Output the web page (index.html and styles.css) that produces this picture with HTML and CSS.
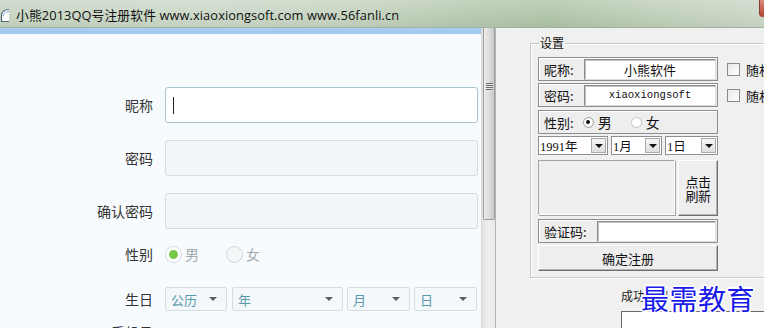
FILE: index.html
```html
<!DOCTYPE html>
<html lang="zh-CN">
<head>
<meta charset="utf-8">
<title>小熊2013QQ号注册软件</title>
<link rel="stylesheet" href="styles.css">
</head>
<body>
<div class="window">
  <div class="titlebar">
    <svg class="app-icon" width="9" height="16" viewBox="0 0 9 16"><path d="M9 2.5 Q1.5 2.5 1.5 9 L1.5 14.5 L9 14.5" fill="#fbfdff" stroke="#4f6378" stroke-width="1.2"/><path d="M9 4.5 Q3.5 4.5 3.5 9" fill="none" stroke="#8fb3d6" stroke-width="1"/></svg>
    <span class="title">小熊2013QQ号注册软件 www.xiaoxiongsoft.com www.56fanli.cn</span>
    <span class="close"></span>
  </div>
  <div class="main">
    <div class="web">
      <div class="web-top"></div>
      <div class="form">
        <div class="row row-input">
          <span class="label">昵称</span>
          <div class="input focus"><span class="caret"></span></div>
        </div>
        <div class="row row-input gap17">
          <span class="label">密码</span>
          <div class="input"></div>
        </div>
        <div class="row row-input gap17">
          <span class="label">确认密码</span>
          <div class="input"></div>
        </div>
        <div class="row row-gender">
          <span class="label">性别</span>
          <span class="radio checked"></span><span class="radio-text">男</span>
          <span class="radio unchecked"></span><span class="radio-text">女</span>
        </div>
        <div class="row row-birth">
          <span class="label">生日</span>
          <div class="select w-cal">公历<span class="arrow"></span></div>
          <div class="select w-year">年<span class="arrow"></span></div>
          <div class="select w-month">月<span class="arrow"></span></div>
          <div class="select w-day">日<span class="arrow"></span></div>
        </div>
        <div class="row row-next">
          <span class="label">手机号</span>
        </div>
      </div>
    </div>
    <div class="scrollbar">
      <div class="thumb"><span class="grip"></span></div>
    </div>
    <div class="panel">
      <div class="group">
        <span class="group-title">设置</span>
        <div class="opt-row">
          <div class="box"><span class="box-label">昵称:</span><div class="tb tb-name">小熊软件</div></div>
          <span class="check"></span><span class="check-text">随机</span>
        </div>
        <div class="opt-row mt2">
          <div class="box"><span class="box-label">密码:</span><div class="tb tb-name mono">xiaoxiongsoft</div></div>
          <span class="check"></span><span class="check-text">随机</span>
        </div>
        <div class="opt-row mt3">
          <div class="box">
            <span class="box-label">性别:</span>
            <span class="cradio on"></span><span class="cradio-text">男</span>
            <span class="cradio off"></span><span class="cradio-text">女</span>
          </div>
        </div>
        <div class="opt-row mt2 combos">
          <div class="combo c-year"><span class="combo-text">1991年</span><span class="combo-btn"></span></div>
          <div class="combo c-month"><span class="combo-text">1月</span><span class="combo-btn"></span></div>
          <div class="combo c-day"><span class="combo-text">1日</span><span class="combo-btn"></span></div>
        </div>
        <div class="opt-row mt5 captcha-row">
          <div class="captcha"></div>
          <div class="btn refresh"><span>点击</span><span>刷新</span></div>
        </div>
        <div class="opt-row mt3">
          <div class="box"><span class="box-label">验证码:</span><div class="tb tb-code"></div></div>
        </div>
        <div class="opt-row mt2">
          <div class="btn submit">确定注册</div>
        </div>
      </div>
      <div class="result">
        <span class="result-label">成功号码:</span>
        <div class="result-box"></div>
        <span class="watermark">最需教育</span>
      </div>
    </div>
  </div>
</div>
</body>
</html>
```

FILE: styles.css
```css
* { box-sizing: border-box; }
html, body { margin: 0; padding: 0; }
body {
  width: 764px;
  height: 328px;
  overflow: hidden;
  background: #f0f0f0;
  font-family: "Noto Sans CJK SC", sans-serif;
}
.window { width: 764px; height: 328px; overflow: hidden; }

/* title bar */
.titlebar {
  height: 28px;
  display: flex;
  align-items: center;
  padding-top: 2px;
  border-bottom: 1px solid #a2b09f;
  background:
    linear-gradient(180deg, rgba(255,255,255,0.22) 0%, rgba(255,255,255,0.05) 60%, rgba(0,0,0,0.03) 100%),
    linear-gradient(90deg, #c4d3c0 0%, #cad7c6 25%, #c4d3bf 45%, #b4c7ad 62%, #aec3a6 72%, #bccdb6 85%, #c9d6c5 100%);
}
.app-icon { flex: none; margin-left: 0; }
.title {
  margin-left: 7px;
  font-family: "Open Sans", "Noto Sans CJK SC", sans-serif;
  font-size: 12.8px;
  color: #111;
  white-space: nowrap;
  letter-spacing: 0.1px;
}
.close {
  margin-left: auto;
  align-self: flex-start;
  margin-top: -2px;
  width: 5px;
  height: 17px;
  background: linear-gradient(180deg, #dc8b7d, #b6412e);
  border-radius: 0 0 0 4px;
  border-left: 1px solid #8a3a2e;
}

.main { display: flex; height: 300px; }

/* left web form */
.web {
  width: 481px;
  flex: none;
  background: #f7fbfd;
}
.web-top {
  height: 6px;
  background: linear-gradient(180deg, #a9cff1, #9cc6ec);
}
.form { padding-top: 53px; }
.row { display: flex; align-items: center; }
.row .label {
  width: 153px;
  margin-right: 12px;
  text-align: right;
  font-size: 14px;
  color: #333;
  flex: none;
}
.row-input { height: 36px; }
.gap17 { margin-top: 17px; }
.input {
  width: 313px;
  height: 36px;
  border: 1px solid #d3dde3;
  border-radius: 3px;
  background: #f2f6f9;
  display: flex;
  align-items: center;
}
.input.focus {
  background: #fff;
  border-color: #a5c6cf;
}
.caret {
  width: 1px;
  height: 17px;
  margin-left: 7px;
  background: #222;
}
.row-gender { margin-top: 13px; height: 24px; }
.radio {
  width: 17px;
  height: 17px;
  border-radius: 50%;
  border: 1px solid #cfd7db;
  background: #fff;
  flex: none;
  display: flex;
  align-items: center;
  justify-content: center;
}
.radio.checked::after {
  content: "";
  width: 9px;
  height: 9px;
  border-radius: 50%;
  background: #76c84a;
}
.radio.unchecked { margin-left: 27px; background: #f4f7f8; }
.radio-text {
  margin-left: 3px;
  font-size: 14px;
  color: #a4abb0;
}
.row-birth { margin-top: 21px; height: 24px; }
.select {
  height: 24px;
  border: 1px solid #d3dde3;
  border-radius: 2px;
  background: #f4f8fa;
  font-size: 13px;
  color: #5a98ae;
  padding-left: 5px;
  display: flex;
  align-items: center;
  flex: none;
}
.arrow {
  margin-left: auto;
  margin-right: 9px;
  width: 0;
  height: 0;
  border-left: 4px solid transparent;
  border-right: 4px solid transparent;
  border-top: 4px solid #5a5f63;
}
.w-cal { width: 62px; }
.w-year { width: 111px; margin-left: 5px; }
.w-month { width: 63px; margin-left: 4px; }
.w-day { width: 63px; margin-left: 4px; }
.row-next { margin-top: 11px; height: 20px; }

/* scrollbar */
.scrollbar {
  width: 15px;
  flex: none;
  background: linear-gradient(90deg, #e2e2e2, #efefef 50%, #e8e8e8);
  border-left: 1px solid #d8d8d8;
  border-right: 1px solid #b5b5b5;
}
.thumb {
  margin-left: 1px;
  width: 12px;
  height: 192px;
  border: 1px solid #9c9c9c;
  border-top: none;
  border-radius: 0 0 2px 2px;
  background: linear-gradient(90deg, #ececec, #dcdcdc 50%, #c9c9c9);
  display: flex;
  justify-content: center;
  padding-top: 55px;
}
.grip {
  width: 7px;
  height: 8px;
  background: repeating-linear-gradient(180deg, #6c6c6c 0 1px, #e8e8e8 1px 2px);
}

/* right panel */
.panel {
  flex: 1;
  background: #f0f0f0;
  padding-top: 15px;
  position: relative;
  font-size: 12px;
  color: #000;
}
.group {
  position: relative;
  margin-left: 34px;
  width: 260px;
  height: 235px;
  border: 1px solid #c6c9cb;
  box-shadow: inset 1px 1px 0 #fff, 1px 1px 0 #fff;
  padding: 13px 0 0 7px;
}
.group-title {
  position: absolute;
  top: -8px;
  left: 8px;
  padding: 0 1px;
  background: #f0f0f0;
  font-size: 12px;
  line-height: 14px;
  color: #111;
}
.opt-row { display: flex; align-items: center; }
.mt2 { margin-top: 2px; }
.mt3 { margin-top: 3px; }
.mt5 { margin-top: 5px; }
.box {
  width: 180px;
  height: 24px;
  border: 1px solid #8d8d8d;
  box-shadow: inset 1px 1px 0 #fff;
  background: #eeeeee;
  display: flex;
  align-items: center;
  padding-left: 5px;
  flex: none;
}
.box-label { font-size: 13px; color: #111; white-space: nowrap; }
.tb {
  margin-left: auto;
  margin-right: 1px;
  height: 21px;
  background: #fff;
  border: 1px solid #8a8a8a;
  border-right-color: #dcdcdc;
  border-bottom-color: #dcdcdc;
  box-shadow: inset 1px 1px 0 #c4c4c4;
  display: flex;
  align-items: center;
  justify-content: center;
  font-size: 13px;
  color: #111;
}
.tb-name { width: 132px; }
.tb-code { width: 119px; }
.mono {
  font-family: "Liberation Mono", monospace;
  font-size: 10.6px;
  letter-spacing: 0;
}
.check {
  width: 13px;
  height: 13px;
  margin-left: 9px;
  border: 1px solid #8b8b8b;
  background: linear-gradient(135deg, #e8e8e8, #fff);
  flex: none;
}
.check-text { margin-left: 6px; font-size: 13px; color: #111; white-space: nowrap; }
.cradio {
  width: 11px;
  height: 11px;
  border-radius: 50%;
  border: 1px solid #9a9a9a;
  background: #fff;
  display: flex;
  align-items: center;
  justify-content: center;
  flex: none;
}
.cradio.on { margin-left: 9px; }
.cradio.on::after {
  content: "";
  width: 4px;
  height: 4px;
  border-radius: 50%;
  background: #111;
}
.cradio.off { margin-left: 19px; border-color: #c2c2c2; }
.cradio-text { margin-left: 4px; font-size: 14px; color: #111; }
.combos { height: 19px; }
.combo {
  height: 19px;
  border: 1px solid #8f8f8f;
  background: #fff;
  display: flex;
  align-items: center;
  padding: 0 1px;
  flex: none;
}
.combo-text {
  font-family: "Liberation Serif", "Noto Sans CJK SC", serif;
  font-size: 12.5px;
  color: #111;
  white-space: nowrap;
}
.combo-btn {
  margin-left: auto;
  width: 15px;
  height: 15px;
  border: 1px solid #a8a8a8;
  background: linear-gradient(180deg, #f6f6f6, #dedede);
  display: flex;
  align-items: center;
  justify-content: center;
}
.combo-btn::after {
  content: "";
  width: 0;
  height: 0;
  border-left: 4px solid transparent;
  border-right: 4px solid transparent;
  border-top: 4px solid #111;
}
.c-year { width: 70px; }
.c-month { width: 51px; margin-left: 3px; }
.c-day { width: 53px; margin-left: 3px; }
.captcha-row { align-items: stretch; }
.captcha {
  width: 137px;
  height: 55px;
  border: 1px solid #a4a4a4;
  border-right-color: #fff;
  border-bottom-color: #fff;
  box-shadow: 1px 1px 0 #a4a4a4;
  background: #efefef;
}
.btn {
  border: 1px solid #fff;
  border-right-color: #6e6e6e;
  border-bottom-color: #6e6e6e;
  box-shadow: inset -1px -1px 0 #b4b4b4;
  background: #eeeeee;
  display: flex;
  align-items: center;
  justify-content: center;
  color: #111;
}
.refresh {
  width: 40px;
  height: 56px;
  margin-left: 3px;
  flex-direction: column;
  font-size: 13px;
  line-height: 14px;
  letter-spacing: -0.5px;
  padding-top: 1px;
}
.submit {
  width: 180px;
  height: 26px;
  font-size: 13px;
}

/* result */
.result {
  position: relative;
  margin-left: 125px;
  margin-top: 10px;
}
.result-label {
  display: block;
  font-size: 12px;
  line-height: 16px;
  color: #222;
  white-space: nowrap;
}
.result-box {
  margin-top: 7px;
  width: 200px;
  height: 30px;
  background: #fff;
  border: 1px solid #6a6a6a;
}
.watermark {
  position: absolute;
  left: 20px;
  top: -6px;
  font-size: 28px;
  line-height: 32px;
  color: #1b1bea;
  letter-spacing: 0.5px;
  white-space: nowrap;
  text-shadow: 1px 0 #fff, -1px 0 #fff, 0 1px #fff, 0 -1px #fff, 1px 1px #fff, -1px -1px #fff, 1px -1px #fff, -1px 1px #fff, 2px 0 #fff, -2px 0 #fff, 0 2px #fff, 0 -2px #fff;
}
```
